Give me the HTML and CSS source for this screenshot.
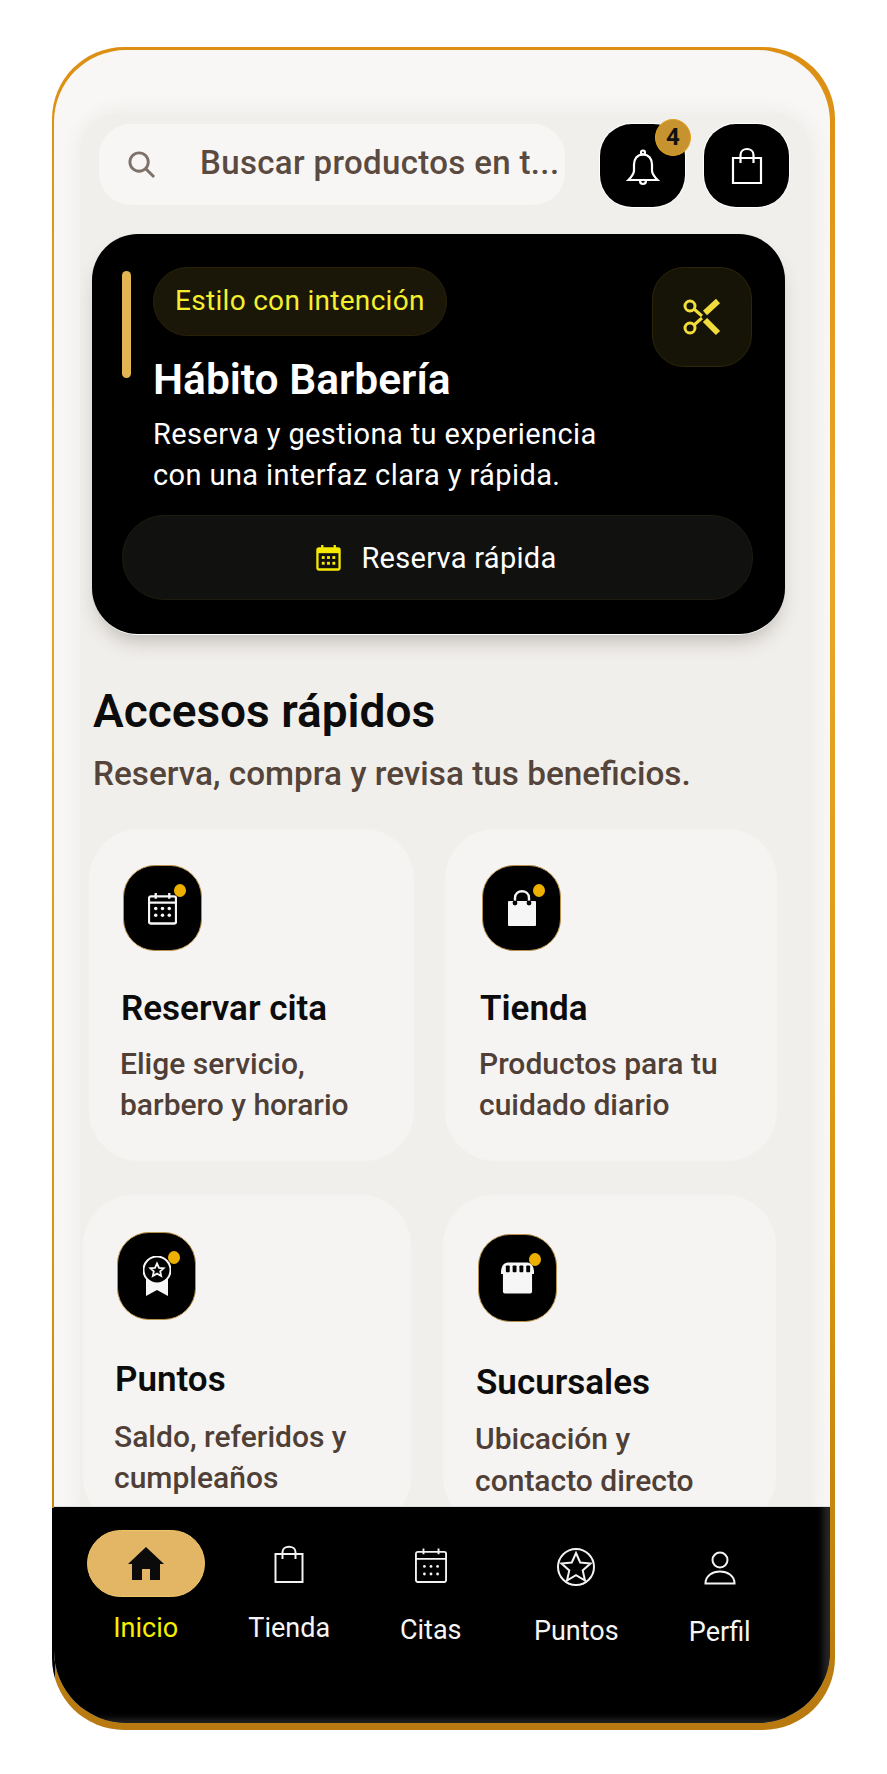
FILE: index.html
```html
<!DOCTYPE html>
<html lang="es">
<head>
<meta charset="UTF-8" />
<meta name="viewport" content="width=device-width, initial-scale=1.0">
<title>Hábito Barbería</title>
<link rel="stylesheet" href="styles.css">
</head>
<body>

<div class="phone">
<div class="screen">

  <main class="content">

    <!-- search and header buttons -->
    <header class="topbar">
      <div class="search">
        <svg class="search-icon" viewBox="0 0 30 30"><circle cx="12.5" cy="12.5" r="9.5"/><path d="M19.5 19.5l8.5 8.5"/></svg>
        <span>Buscar productos en t...</span>
      </div>
      <button class="round-btn bell-btn">
        <svg viewBox="0 0 34 38" width="34" height="38"><path d="M17 5.500c-6 0-9 4.600-9 10v6c0 3-1.700 5.600-5.600 9.500h29.200c-3.900-3.900-5.600-6.500-5.600-9.500v-6c0-5.400-3-10-9-10z"/><circle cx="17" cy="3.500" r="2"/><path d="M14 31.500c0 2 1.200 3.500 3 3.500s3-1.500 3-3.500"/></svg>
        <span class="badge">4</span>
      </button>
      <button class="round-btn">
        <svg viewBox="0 0 32 38" width="32" height="38"><path d="M2 11h28v25H2zM9.500 16V8c0-8 13-8 13 0v8"/></svg>
      </button>
    </header>

    <!-- hero card -->
    <section class="hero">
      <div class="hero-top">
        <div class="hero-bar"></div>
        <div class="hero-text">
          <div class="hero-pill">Estilo con intención</div>
          <h1>Hábito Barbería</h1>
          <p>Reserva y gestiona tu experiencia<br>con una interfaz clara y rápida.</p>
        </div>
        <div class="hero-tile">
          <svg viewBox="0 0 38 38" width="38" height="38"><circle cx="7" cy="8" r="5"/><circle cx="7" cy="30" r="5"/><path d="M11 11l8 7M11 27l8-7"/><path class="blade" d="M22 15l13-12M22 22l13 13"/></svg>
        </div>
      </div>
      <button class="hero-cta">
        <svg viewBox="0 0 26 28" width="25" height="27"><path class="cal-body" d="M3 4.500h20a1.500 1.500 0 0 1 1.500 1.500v19a1.500 1.500 0 0 1-1.500 1.500H3a1.500 1.500 0 0 1-1.500-1.500V6A1.500 1.500 0 0 1 3 4.500zM6.500 1v5M19.500 1v5"/><rect class="cal-head" x="1.500" y="4.500" width="23" height="5"/><g class="cal-dots"><rect x="6" y="12.500" width="3" height="3"/><rect x="11.500" y="12.500" width="3" height="3"/><rect x="17" y="12.500" width="3" height="3"/><rect x="6" y="18.500" width="3" height="3"/><rect x="11.500" y="18.500" width="3" height="3"/><rect x="17" y="18.500" width="3" height="3"/></g></svg>
        <span>Reserva rápida</span>
      </button>
    </section>

    <h2>Accesos rápidos</h2>
    <p class="subtitle">Reserva, compra y revisa tus beneficios.</p>

    <!-- quick access cards -->
    <div class="card-row row-one">
      <a class="card card-a">
        <div class="tile">
          <svg viewBox="0 0 30 34" width="29" height="33"><path class="line" d="M3 4.500h24a2 2 0 0 1 2 2v24a2 2 0 0 1-2 2H3a2 2 0 0 1-2-2v-24a2 2 0 0 1 2-2zM1 11h28M8 1v6M22 1v6"/><g class="solid"><circle cx="8" cy="17" r="1.800"/><circle cx="15" cy="17" r="1.800"/><circle cx="22" cy="17" r="1.800"/><circle cx="8" cy="24" r="1.800"/><circle cx="15" cy="24" r="1.800"/><circle cx="22" cy="24" r="1.800"/></g></svg>
          <i class="dot"></i>
        </div>
        <h3>Reservar cita</h3>
        <p>Elige servicio,<br>barbero y horario</p>
      </a>
      <a class="card card-b">
        <div class="tile">
          <svg viewBox="0 0 28 38" width="28" height="38"><path class="solid" d="M1 12h26a1 1 0 0 1 1 1v23a1 1 0 0 1-1 1H1a1 1 0 0 1-1-1V13a1 1 0 0 1 1-1z"/><path class="line" d="M7 14V9c0-9 14-9 14 0v5"/><circle class="hole" cx="7" cy="14" r="2.400"/><circle class="hole" cx="21" cy="14" r="2.400"/></svg>
          <i class="dot"></i>
        </div>
        <h3>Tienda</h3>
        <p>Productos para tu<br>cuidado diario</p>
      </a>
    </div>

    <div class="card-row row-two">
      <a class="card card-c">
        <div class="tile">
          <svg viewBox="0 0 28 40" width="28" height="40"><path class="solid" d="M3 22h22v18l-11-6-11 6z"/><circle class="ring" cx="14" cy="14" r="13.500"/><path class="star" d="M14 7.500l2 4.300 4.700.5-3.500 3.100 1 4.600-4.200-2.400-4.200 2.400 1-4.600-3.500-3.100 4.700-.5z"/></svg>
          <i class="dot"></i>
        </div>
        <h3>Puntos</h3>
        <p>Saldo, referidos y<br>cumpleaños</p>
      </a>
      <a class="card card-d">
        <div class="tile">
          <svg viewBox="0 0 34 32" width="33" height="32"><path class="solid" d="M2 10h30v20a2 2 0 0 1-2 2H4a2 2 0 0 1-2-2z"/><path class="solid" d="M7 0h20c4 0 7 4 7 10v2H0v-2C0 4 3 0 7 0z"/><g class="awning"><rect x="5" y="3" width="4" height="7" rx="1"/><rect x="12" y="3" width="4" height="7" rx="1"/><rect x="19" y="3" width="4" height="7" rx="1"/><rect x="26" y="3" width="4" height="7" rx="1"/></g></svg>
          <i class="dot"></i>
        </div>
        <h3>Sucursales</h3>
        <p>Ubicación y<br>contacto directo</p>
      </a>
    </div>

  </main>

  <!-- bottom tabs -->
  <nav class="tabs">
    <a class="tab active">
      <div class="tab-icon home-pill">
        <svg viewBox="0 0 36 36" width="36" height="36"><path d="M18 1L0 18h4v16h10V23h8v11h10V18h4z"/></svg>
      </div>
      <span>Inicio</span>
    </a>
    <a class="tab tab-2">
      <div class="tab-icon">
        <svg viewBox="0 0 30 38" width="30" height="38"><path d="M1.500 9h27v28h-27zM8.500 14V7c0-7 13-7 13 0v7"/></svg>
      </div>
      <span>Tienda</span>
    </a>
    <a class="tab tab-3">
      <div class="tab-icon">
        <svg viewBox="0 0 34 38" width="32" height="37"><path d="M3 4.500h28a2 2 0 0 1 2 2v28a2 2 0 0 1-2 2H3a2 2 0 0 1-2-2v-28a2 2 0 0 1 2-2zM1 12h32M9 1v6M25 1v6"/><g class="tab-dots"><circle cx="10" cy="20" r="1.500"/><circle cx="17" cy="20" r="1.500"/><circle cx="24" cy="20" r="1.500"/><circle cx="10" cy="28" r="1.500"/><circle cx="17" cy="28" r="1.500"/><circle cx="24" cy="28" r="1.500"/></g></svg>
      </div>
      <span>Citas</span>
    </a>
    <a class="tab tab-4">
      <div class="tab-icon">
        <svg viewBox="0 0 38 40" width="38" height="40"><circle cx="19" cy="20" r="18"/><path d="M19 6l4.200 9.500 10.300 1-7.800 6.900 2.300 10.100-9-5.300-9 5.300 2.300-10.100-7.800-6.900 10.300-1z"/></svg>
      </div>
      <span>Puntos</span>
    </a>
    <a class="tab tab-5">
      <div class="tab-icon">
        <svg viewBox="0 0 32 34" width="32" height="34"><circle cx="16" cy="9" r="7.500"/><path d="M1.500 32.500c0-16 29-16 29 0z"/></svg>
      </div>
      <span>Perfil</span>
    </a>
  </nav>

</div>
</div>

</body>
</html>
```

FILE: styles.css
```css
/* page */
*
{
  box-sizing: border-box;
}
body
{
  margin: 0;
  background: #fff;
  font-family: Roboto, "Noto Sans", sans-serif;
}
svg
{
  display: block;
  fill: none;
}

/* gold frame round the screen, the black strip covers the frame beside the tabs */
.phone
{
  width: 783px;
  height: 1683px;
  margin: 47px 0 0 52px;
  padding: 3px 5px 7px 2px;
  border-radius: 72px;
  background:
    linear-gradient(#000, #000) left 0 bottom 40px / 3px 182px no-repeat,
    linear-gradient(180deg, #dc8f12 0%, #e9a628 30%, #d8960f 70%, #b87a10 100%);
}
.screen
{
  display: flex;
  flex-direction: column;
  height: 100%;
  border-radius: 72px;
  overflow: hidden;
  background: #f8f7f6;
}

.content
{
  flex: 1;
  min-height: 0;
  overflow: hidden;
  margin: 63px 18px 0 26px;
  border-radius: 40px 40px 0 0;
  background: #f1efec;
  box-shadow: 0 0 14px 6px #f1efec;
}

/* top bar */
.topbar
{
  display: flex;
  padding: 11px 0 0 19px;
}
.search
{
  display: flex;
  align-items: center;
  width: 466px;
  height: 81px;
  padding-left: 28px;
  border-radius: 32px;
  background: #f7f6f5;
  color: #5a4a40;
  font-size: 33px;
  font-weight: 500;
  letter-spacing: .35px;
}
.search span
{
  margin-left: 44px;
  padding-bottom: 4px;
  white-space: nowrap;
}
.search-icon
{
  width: 29px;
  height: 29px;
  stroke: #7f716a;
  stroke-width: 3;
}
.round-btn
{
  position: relative;
  display: flex;
  align-items: center;
  justify-content: center;
  width: 85px;
  height: 83px;
  margin-left: 19px;
  padding: 0;
  border: 0;
  border-radius: 32px;
  background: #000;
  box-shadow: 0 0 0 1px #fff;
}
.round-btn svg
{
  stroke: #fff;
  stroke-width: 2.200;
}
.bell-btn
{
  margin-left: 35px;
}
.bell-btn svg
{
  margin-top: 4px;
}
.badge
{
  position: absolute;
  top: -5px;
  right: -6px;
  width: 36px;
  height: 37px;
  border-radius: 50%;
  border: 1px solid #e2a21f;
  background: #c6932f;
  color: #111;
  font: 700 24px/35px Roboto, sans-serif;
  text-align: center;
}

/* hero card */
.hero
{
  width: 693px;
  margin: 27px 0 0 12px;
  padding: 33px 33px 34px 30px;
  border-radius: 46px;
  background: #000;
  box-shadow: 0 2px 0 -1px #fff, 0 12px 20px -6px rgba(60, 50, 40, .3);
}
.hero-top
{
  display: flex;
  align-items: flex-start;
  height: 248px;
}
.hero-bar
{
  width: 9px;
  height: 107px;
  margin-top: 4px;
  border-radius: 5px;
  background: #e3b552;
}
.hero-text
{
  flex: 1;
  margin-left: 22px;
  color: #fff;
}
.hero-pill
{
  display: inline-block;
  height: 69px;
  padding: 0 21px;
  border: 1px solid #2a2208;
  border-radius: 35px;
  background: #1a1708;
  color: #f4ef2e;
  font-size: 28px;
  letter-spacing: .3px;
  line-height: 65px;
}
.hero h1
{
  margin: 20px 0 0;
  font-size: 42.500px;
  font-weight: 600;
  line-height: 48px;
}
.hero p
{
  margin: 10px 0 0;
  font-size: 29px;
  letter-spacing: .4px;
  line-height: 41px;
}
.hero-tile
{
  display: flex;
  align-items: center;
  justify-content: center;
  width: 100px;
  height: 100px;
  border: 1px solid #2d2508;
  border-radius: 32px;
  background: #161407;
}
.hero-tile svg
{
  stroke: #f0dc3a;
  stroke-width: 3;
}
.hero-tile .blade
{
  stroke-width: 6;
}
.hero-cta
{
  display: flex;
  align-items: center;
  justify-content: center;
  width: 631px;
  height: 85px;
  padding: 0 2px 0 0;
  border: 1px solid #1f1b10;
  border-radius: 42px;
  background: #111110;
  color: #fff;
  font: 400 29px Roboto, sans-serif;
  letter-spacing: .3px;
}
.hero-cta span
{
  margin-left: 20px;
}
.cal-body
{
  stroke: #f5ea00;
  stroke-width: 2.400;
}
.cal-head
{
  fill: #f5ea00;
}
.cal-dots
{
  fill: #f5ea00;
}

/* section heading */
h2
{
  margin: 48px 0 0 13px;
  color: #0c0c0c;
  font-size: 46px;
  font-weight: 600;
  line-height: 58px;
}
.subtitle
{
  margin: 14px 0 0 13px;
  color: #54443a;
  font-size: 33.300px;
  font-weight: 500;
  line-height: 40px;
}

/* quick access cards */
.card-row
{
  display: flex;
}
.row-one
{
  margin-top: 36px;
  padding-left: 10px;
  column-gap: 33px;
}
.row-two
{
  margin-top: 36px;
  padding-left: 4px;
  column-gap: 32px;
}
.card
{
  height: 330px;
  padding: 35px 0 0 33px;
  border-radius: 50px;
  background: #f5f4f3;
  box-shadow: 0 0 3px rgba(255, 255, 255, .8);
}
.card-a { width: 323px; }
.card-b { width: 330px; padding-left: 36px; }
.card-c { width: 326px; padding-top: 36px; }
.card-d { width: 331px; margin-left: 2px; padding-top: 38px; padding-left: 34px; }
.tile
{
  position: relative;
  display: flex;
  align-items: center;
  justify-content: center;
  width: 79px;
  height: 86px;
  border: 1px solid #b8924a;
  border-radius: 32px;
  background: #000;
}
.row-two .tile
{
  height: 88px;
}
.dot
{
  position: absolute;
  top: 18px;
  right: 15px;
  width: 12px;
  height: 13px;
  border-radius: 50%;
  background: #edb000;
}
.tile .line
{
  stroke: #f6f6f6;
  stroke-width: 2.400;
}
.tile .solid
{
  fill: #f6f6f6;
}
.tile .hole
{
  fill: #000;
}
.tile .ring
{
  stroke: #f6f6f6;
  stroke-width: 2;
  fill: #000;
}
.tile .star
{
  stroke: #f6f6f6;
  stroke-width: 1.800;
}
.tile .awning
{
  fill: #000;
}
.card h3
{
  margin: 37px 0 0 -2px;
  color: #0c0c0c;
  font-size: 35px;
  font-weight: 600;
  line-height: 42px;
}
.card p
{
  margin: 13px 0 0 -3px;
  color: #4f3f36;
  font-size: 30px;
  font-weight: 500;
  line-height: 41px;
}
.card-c h3
{
  margin-top: 39px;
}
.card-c p
{
  margin-top: 15px;
}
.card-d h3
{
  margin-top: 40px;
}
.card-d p
{
  margin-top: 14px;
  line-height: 42px;
}

/* bottom tabs */
.tabs
{
  display: grid;
  grid-template-columns: repeat(5, 143.500px);
  height: 217px;
  padding: 23px 0 0 20px;
  border-top: 1px solid #ddd;
  background: #000;
  box-shadow: inset -8px -5px 6px -1px #262626;
}
.tab
{
  display: flex;
  flex-direction: column;
  align-items: center;
  color: #f5f5f5;
  font-size: 27px;
}
.tab-2 { padding-top: 0; }
.tab-3 { padding: 2px 4px 0 0; }
.tab-4 { padding-top: 3px; }
.tab-5 { padding-top: 4px; }
.tab-icon
{
  display: flex;
  align-items: center;
  justify-content: center;
  height: 67px;
  margin-bottom: 15px;
}
.tab-icon svg
{
  stroke: #f2f2f2;
  stroke-width: 2;
}
.active
{
  color: #f6ef00;
}
.home-pill
{
  width: 118px;
  border: 1px solid #f0c666;
  border-radius: 34px;
  background: #e3b665;
}
.home-pill svg
{
  fill: #0b0b0b;
  stroke: none;
}
.tab-dots
{
  fill: #f2f2f2;
  stroke: none;
}
```
